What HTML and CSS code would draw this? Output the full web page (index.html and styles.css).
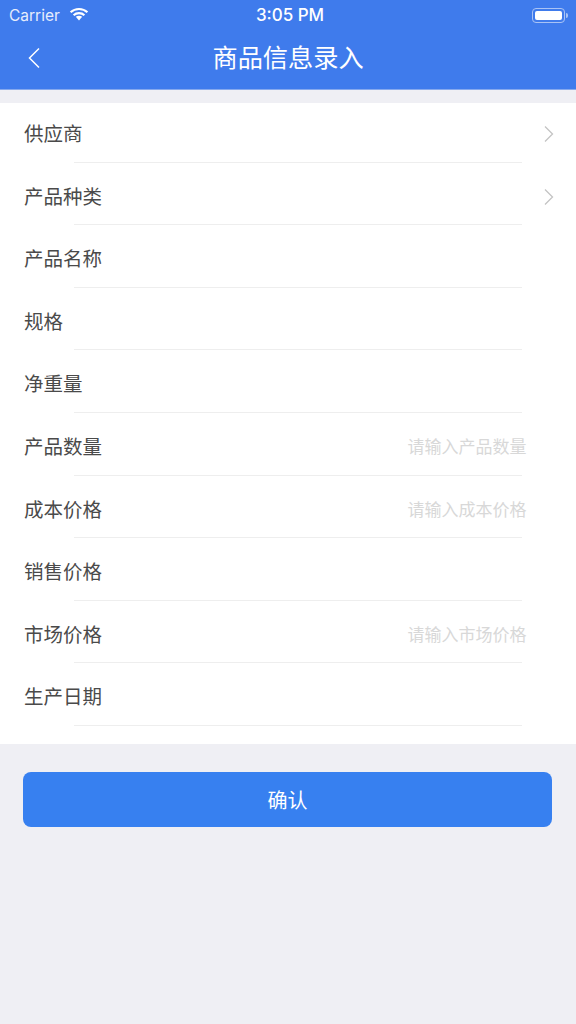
FILE: index.html
```html
<!DOCTYPE html>
<html lang="zh">
<head>
  <meta charset="UTF-8" />
  <meta name="viewport" content="width=device-width, initial-scale=1.0" />
  <title>商品信息录入</title>
  <link rel="stylesheet" href="styles.css">
</head>
<body>
  <header class="header">
    <div class="status-bar">
      <div class="status-left">
        <span class="carrier">Carrier</span>
        <svg class="wifi" width="20" height="14" viewBox="0 0 20 14">
          <path d="M10 13.5 L6.8 9.8 C8.6 8.3 11.4 8.3 13.2 9.8 Z" fill="#fff"/>
          <path d="M1.6 5.2 C6.2 0.9 13.8 0.9 18.4 5.2" fill="none" stroke="#fff" stroke-width="2.2"/>
          <path d="M4.6 8.2 C7.6 5.4 12.4 5.4 15.4 8.2" fill="none" stroke="#fff" stroke-width="2.2"/>
        </svg>
      </div>
      <span class="time">3:05 PM</span>
      <div class="battery">
        <div class="battery-body"><div class="battery-fill"></div></div>
        <div class="battery-tip"></div>
      </div>
    </div>
    <div class="nav-bar">
      <svg class="back" width="14" height="22" viewBox="0 0 14 22">
        <path d="M12 1.5 L2.5 11 L12 20.5" fill="none" stroke="#fff" stroke-width="1.5"/>
      </svg>
      <h1>商品信息录入</h1>
    </div>
  </header>

  <main class="form">
    <div class="row"><span class="label">供应商</span>
      <svg class="arrow" width="12" height="18" viewBox="0 0 12 18"><path d="M2 1.5 L9.5 9 L2 16.5" fill="none" stroke="#c4c4c4" stroke-width="1.3"/></svg>
    </div>
    <div class="row"><span class="label">产品种类</span>
      <svg class="arrow" width="12" height="18" viewBox="0 0 12 18"><path d="M2 1.5 L9.5 9 L2 16.5" fill="none" stroke="#c4c4c4" stroke-width="1.3"/></svg>
    </div>
    <div class="row"><span class="label">产品名称</span></div>
    <div class="row"><span class="label">规格</span></div>
    <div class="row"><span class="label">净重量</span></div>
    <div class="row"><span class="label">产品数量</span><span class="hint">请输入产品数量</span></div>
    <div class="row"><span class="label">成本价格</span><span class="hint">请输入成本价格</span></div>
    <div class="row"><span class="label">销售价格</span></div>
    <div class="row"><span class="label">市场价格</span><span class="hint">请输入市场价格</span></div>
    <div class="row"><span class="label">生产日期</span></div>
  </main>

  <div class="actions">
    <button class="confirm">确认</button>
  </div>
</body>
</html>
```
FILE: styles.css
```css
* {
  box-sizing: border-box;
}

body {
  margin: 0;
  min-height: 1024px;
  background-color: #efeff4;
  font-family: "Noto Sans CJK SC", "Liberation Sans", sans-serif;
  color: #4a4a4a;
}

.header {
  height: 90px;
  background-color: #3f7bec;
  color: #fff;
  border-bottom: 1px solid #86a9ee;
}

.status-bar {
  height: 30px;
  padding: 0 8px 0 9px;
  display: flex;
  align-items: center;
  justify-content: space-between;
}

.status-left {
  width: 120px;
  display: flex;
  align-items: center;
  gap: 9px;
}

.carrier {
  font-family: Inter, "Liberation Sans", sans-serif;
  font-size: 15.5px;
  color: #e6edfc;
}

.wifi {
  margin-bottom: 2px;
}

.time {
  padding-left: 3px;
  font-family: Inter, "Liberation Sans", sans-serif;
  font-size: 17px;
  font-weight: 500;
}

.battery {
  width: 120px;
  display: flex;
  align-items: center;
  justify-content: flex-end;
}

.battery-body {
  width: 33px;
  height: 15px;
  padding: 2px;
  border: 1px solid #a9c3f5;
  border-radius: 4px;
}

.battery-fill {
  height: 100%;
  background-color: #fff;
  border-radius: 2px;
}

.battery-tip {
  width: 2px;
  height: 5px;
  margin-left: 1px;
  background-color: #a9c3f5;
  border-radius: 0 2px 2px 0;
}

.nav-bar {
  height: 56px;
  position: relative;
  display: flex;
  justify-content: center;
}

.back {
  position: absolute;
  left: 27px;
  top: 17px;
}

h1 {
  margin: 0;
  font-size: 25.2px;
  font-weight: 400;
  line-height: 52px;
}

.form {
  margin-top: 13px;
  padding-bottom: 18.5px;
  background-color: #fff;
}

.row {
  height: 62.6px;
  padding: 0 21.5px 15.5px 24px;
  position: relative;
  display: flex;
  align-items: flex-end;
}

.row:first-child {
  height: 59.6px;
}

/* separator starts past the label, stops short of the arrow */
.row::after {
  content: "";
  position: absolute;
  left: 74px;
  right: 54px;
  bottom: 0;
  height: 1px;
  background-color: #eeeeee;
}

.label {
  font-size: 19.5px;
  line-height: 28px;
  white-space: nowrap;
}

.hint {
  margin-left: auto;
  margin-right: 28px;
  font-size: 17px;
  line-height: 28px;
  color: #d8d8d8;
}

.arrow {
  margin-left: auto;
  margin-bottom: 4px;
}

.actions {
  padding: 28px 24px 0 23px;
}

.confirm {
  display: block;
  width: 100%;
  height: 55px;
  background-color: #3780f0;
  border: none;
  border-radius: 8px;
  color: #fff;
  font-family: inherit;
  font-size: 20px;
}
```
